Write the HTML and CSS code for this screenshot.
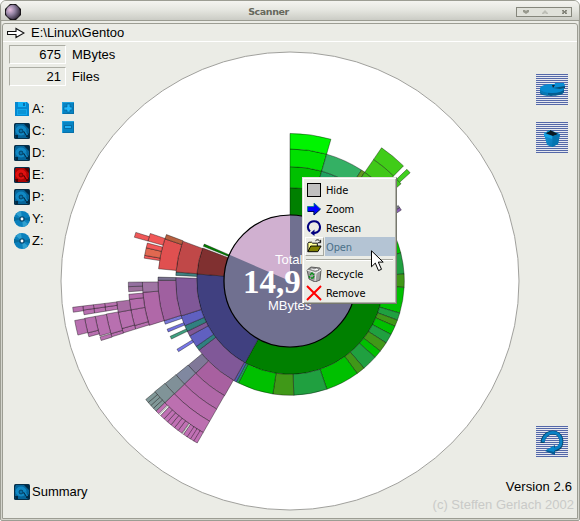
FILE: index.html
```
<!DOCTYPE html>
<html lang="en">
<head>
<meta charset="utf-8">
<title>Scanner</title>
<link rel="stylesheet" href="styles.css">
</head>
<body>
<svg class="defs" width="0" height="0" aria-hidden="true">
  <defs>
    <symbol id="disk" viewBox="0 0 16 16">
      <rect width="16" height="16" rx="1.5" fill="#06304a"/>
      <path d="M2 1h11v2h2v10l-2 2H2L1 12V3z" fill="var(--mid)"/>
      <path d="M10 1h5v5zM1 12h3v3H2zM12 13l3-3v4h-3z" fill="var(--dark)"/>
      <ellipse cx="7" cy="7.500" rx="5.500" ry="5" fill="var(--lite)"/>
      <circle cx="7" cy="8" r="2" fill="var(--mid)" stroke="var(--dark)" stroke-width=".6"/>
      <circle cx="7" cy="8" r=".7" fill="var(--lite)"/>
      <path d="M10 8l4.500 5.500" stroke="var(--dark)" stroke-width="2.600"/>
      <path d="M10 6.500l3.500 5.500" stroke="var(--lite)" stroke-width="1.500"/>
    </symbol>
    <symbol id="cd" viewBox="0 0 16 16">
      <circle cx="8" cy="8" r="8" fill="#0a80bc"/>
      <path d="M8 8L2 3Q4 .7 7 0zM8 8l6 5q-2 2.300-5 3z" fill="#30a0d0"/>
      <path d="M8 8L16 6v4zM8 8L0 6v4z" fill="#066c9c"/>
      <circle cx="8" cy="8" r="2.800" fill="#0a4c74"/>
      <circle cx="8" cy="8" r="1.400" fill="#fff"/>
    </symbol>
    <radialGradient id="ball" cx=".3" cy=".35" r=".75">
      <stop offset="0" stop-color="#e8c0e0"/><stop offset=".45" stop-color="#9484a4"/><stop offset="1" stop-color="#302838"/>
    </radialGradient>
    <linearGradient id="bluefill" x1="0" x2="1" y1="0" y2="1">
      <stop offset="0" stop-color="#18a0e0"/><stop offset="1" stop-color="#0468a8"/>
    </linearGradient>
  </defs>
</svg>
<div class="window">
  <header class="titlebar">
    <svg class="orb" viewBox="0 0 16 16"><path d="M5 0h6l5 5v6l-5 5H5l-5-5V5z" fill="#181418"/><circle cx="8" cy="8" r="7.200" fill="url(#ball)"/></svg>
    <span class="title">Scanner</span>
    <svg class="controls" viewBox="0 0 56 10">
      <rect x=".5" y=".5" width="55" height="9" fill="#e0e1da" stroke="#85867c"/>
      <path d="M7 3h2l1 1 1-1h2v2l-3 2-3-2z" fill="#98998e"/>
      <path d="M26 6l3-3 3 3v1h-2l-1-1-1 1h-2z" fill="#bdbeb6"/>
      <path d="M46 3h2v1h1V3h2v1l-1 1 1 1v1h-2V6h-1v1h-2V6l1-1-1-1z" fill="#85867c"/>
    </svg>
  </header>
  <main class="client">
    <div class="path">
      <svg class="arrow" viewBox="0 0 18 12"><path d="M.5 4.500h8.500V1.500l8 4.500-8 4.500v-3H.5z" fill="#fff" stroke="#111" stroke-width="1.100"/></svg>
      <span>E:\Linux\Gentoo</span>
    </div>
    <div class="stage">
      <svg class="chart" id="chart" viewBox="-230 -230 460 460"></svg>
      <aside class="left">
        <div class="stat"><output class="field">675</output><span>MBytes</span></div>
        <div class="stat"><output class="field">21</output><span>Files</span></div>
        <div class="tools">
          <ul class="drives">
            <li><svg class="drive" viewBox="0 0 16 16"><path d="M1 1h12l2 2v12H1z" fill="#0588d0"/><path d="M4 1h8v5H4z" fill="#10b0f4"/><path d="M9 2h2v3H9z" fill="#0570b0"/><path d="M3 8h10v6H3z" fill="#10a8ec"/><path d="M4 10h8M4 12h8" stroke="#0680c0"/></svg>A:</li>
            <li><svg class="drive"><use href="#disk"/></svg>C:</li>
            <li><svg class="drive"><use href="#disk"/></svg>D:</li>
            <li><svg class="drive active"><use href="#disk"/></svg>E:</li>
            <li><svg class="drive"><use href="#disk"/></svg>P:</li>
            <li><svg class="drive"><use href="#cd"/></svg>Y:</li>
            <li><svg class="drive"><use href="#cd"/></svg>Z:</li>
          </ul>
          <div class="zoomers">
            <svg viewBox="0 0 12 12"><rect width="12" height="12" fill="#0870a8"/><path d="M0 0h12v1H1v11H0z" fill="#20a0dc"/><path d="M1 1h10v10H1z" fill="#0684c4"/><path d="M5 2h3v3h2v3H8v2H5V8H2V5h3z" fill="#20b8fc" stroke="#055f94" stroke-width=".6"/></svg>
            <svg viewBox="0 0 12 12"><rect width="12" height="12" fill="#0870a8"/><path d="M0 0h12v1H1v11H0z" fill="#20a0dc"/><path d="M1 1h10v10H1z" fill="#0684c4"/><path d="M2.500 4.500h7v3h-7z" fill="#20b0f4" stroke="#055f94" stroke-width=".8"/></svg>
          </div>
        </div>
        <div class="summary"><svg class="drive"><use href="#disk"/></svg>Summary</div>
      </aside>
      <aside class="right">
        <svg class="action" viewBox="0 0 32 31">
          <path d="M4 14v5c1 4 23 4 24-1v-4z" fill="#045c90"/><path d="M4 14v4c1 2 4 3 8 3.500V17z" fill="#0878b4"/>
          <ellipse cx="16" cy="14.500" rx="12" ry="4.500" fill="#078ad0"/>
          <path d="M17 14l2-5 9 0 1 3z" fill="#0a8ed4"/><path d="M17 14l12-2v2l-5 1z" fill="#045078"/><path d="M16 11h3l-2 3z" fill="#182030"/>
        </svg>
        <svg class="action bin" viewBox="0 0 32 31">
          <path d="M8 12l6-4 10 4-2 10-6 3-5-2z" fill="url(#bluefill)"/><path d="M9 11l5-3 8 4-5 2z" fill="#0c1820"/><path d="M17 14l7-2-2 10-6 3z" fill="#0574b0"/><path d="M8 12v-1l6-3v1zM8 12l8 2v3l-8-3z" fill="#18a4e4"/>
        </svg>
        <svg class="action refresh" viewBox="0 0 32 31">
          <path d="M6.500 17C7 9 14 5 20 7c7 3 7 13 1 16l-4 1" fill="none" stroke="#064468" stroke-width="4"/>
          <path d="M9 25l10-6v10z" fill="#045c94"/>
          <path d="M7 16C8 9 14 5 20 7c6 3 7 12 1 15l-4 2" fill="none" stroke="#0880c4" stroke-width="3"/>
          <path d="M10 24l8-4v6z" fill="#0888cc"/>
        </svg>
        <p class="version">Version 2.6</p>
        <p class="copyright">(c) Steffen Gerlach 2002</p>
      </aside>
    </div>
  </main>
</div>
<div class="menu">
  <div class="item"><svg viewBox="0 0 16 16"><rect x="1.500" y="1.500" width="13" height="13" fill="#c0c0c0" stroke="#000"/></svg><span>Hide</span></div>
  <div class="item"><svg viewBox="0 0 16 16"><path d="M1.500 5.500H8V2l6.500 6L8 14v-3.500H1.500z" fill="#00f" stroke="#008080" stroke-width=".8"/><path d="M2 10.500h6V14l6.500-6" fill="none" stroke="#000060"/></svg><span>Zoom</span></div>
  <div class="item"><svg viewBox="0 0 16 16"><path d="M4 11.500C-.5 7 3 1.300 8 1.300c6.500 0 8 8 3 11l-3 1" fill="none" stroke="#000080" stroke-width="2"/><path d="M4.500 13l4-3.500v6.500z" fill="#000080"/></svg><span>Rescan</span></div>
  <div class="item hot"><svg viewBox="0 0 18 18"><path d="M2 14.500v-9l1-1h3l1 1h5v3" fill="#ffff98" stroke="#000"/><path d="M2 14.500l3-6h11l-3.500 6z" fill="#808000" stroke="#000"/><path d="M10 3c2-2 4-1 5 1M15.500 2v3h-3" fill="none" stroke="#000"/></svg><span>Open</span></div>
  <hr>
  <div class="item"><svg viewBox="0 0 16 16"><path d="M1 4l4-3 9 1 1 2-1 10-5 2-6-3z" fill="#a0a0a0" stroke="#444" stroke-width=".8"/><path d="M1 4l9 3 5-3-5 3-1 8" fill="none" stroke="#eee"/><path d="M3 3l3-1 2 1 3-1 2 2-4 1z" fill="#f8f8f8" stroke="#555" stroke-width=".5"/><path d="M4 9l2-2 2 2M8 10l-1 2H5M4 12L3 10" fill="none" stroke="#089018" stroke-width="1.300"/></svg><span>Recycle</span></div>
  <div class="item"><svg viewBox="0 0 16 16"><path d="M1 1l14 14M15 1L1 15" stroke="#f00" stroke-width="2"/></svg><span>Remove</span></div>
</div>
<svg class="cursor" viewBox="0 0 13 22"><path d="M.5 .8v16l3.800-3.700 3.200 7.500 3-1.300-3.200-7.200h4.900z" fill="#fff" stroke="#000"/></svg>
<script src="chart.js"></script>
</body>
</html>
```
FILE: styles.css
```
* { box-sizing: border-box; }
body {
  margin: 0;
  width: 580px;
  height: 521px;
  overflow: hidden;
  position: relative;
  background: #fff;
  color: #000;
  font: 13px/16px "Liberation Sans", Arial, sans-serif;
}
.defs { position: absolute; }
.window {
  display: flex;
  flex-direction: column;
  height: 521px;
  background: #ebece6;
  border: 1px solid #9c9d93;
  border-radius: 6px 6px 2px 2px;
  box-shadow: inset 0 0 0 1px #d4d5cd;
}
.titlebar {
  display: flex;
  align-items: center;
  justify-content: space-between;
  height: 20px;
  padding: 2px 7px 0 4px;
  border-bottom: 1px solid #9c9d93;
  border-radius: 5px 5px 0 0;
  background: linear-gradient(#f4f4f0, #e6e7e1 45%, #cbccc5);
}
.orb { width: 16px; height: 16px; }
.title {
  font: bold 9.500px/12px "DejaVu Sans", sans-serif;
  letter-spacing: -.4px;
  color: #67685c;
}
.controls { width: 56px; height: 10px; }
.client {
  flex: 1;
  display: flex;
  flex-direction: column;
  margin: 2px 1px 1px;
  border: 1px solid #9c9d93;
  border-radius: 3px 3px 0 0;
}
.path {
  display: flex;
  align-items: center;
  gap: 6px;
  height: 18px;
  padding: 0 0 0 4px;
  border-bottom: 1px solid #fff;
}
.arrow { width: 18px; height: 12px; }
.stage { flex: 1; display: grid; grid-template-columns: 57px 1fr 150px; grid-template-rows: 1fr; }
.chart { grid-area: 1 / 1 / 2 / 4; width: 460px; height: 460px; margin: 9px 0 0 57px; }
.chart .rim { fill: #fff; stroke: #a0a09c; }
.chart .seg { stroke: rgba(0, 0, 0, .42); stroke-width: .9; }
.chart .disc { fill: none; stroke: #000; stroke-width: 1.200; }
.chart text { fill: #fff; font-size: 13px; }
.chart .total { font: bold 33px "Liberation Serif", serif; }
.left { grid-area: 1 / 1; width: 120px; padding: 3px 0 15px 6px; display: flex; flex-direction: column; }
.stat { display: flex; align-items: center; gap: 6px; height: 19px; margin-bottom: 3px; }
.field {
  width: 57px;
  height: 19px;
  padding: 1px 4px 0 0;
  text-align: right;
  border: 1px solid;
  border-color: #acada4 #fff #fff #acada4;
}
.tools { display: flex; gap: 16px; margin: 9px 0 0 5px; }
.drives { list-style: none; margin: 0; padding: 0; width: 32px; }
.drives li, .summary { display: flex; align-items: center; gap: 2px; height: 22px; }
.drive { width: 16px; height: 16px; flex: none; --lite: #1088c4; --mid: #066498; --dark: #022a44; }
.drive.active { --lite: #e01010; --mid: #a80404; --dark: #500000; }
.zoomers { display: flex; flex-direction: column; gap: 7px; padding-top: 4px; }
.zoomers svg { width: 12px; height: 12px; display: block; }
.summary { margin: auto 0 0 5px; }
.right { grid-area: 1 / 3; display: flex; flex-direction: column; align-items: flex-end; padding: 32px 3px 5px 0; white-space: nowrap; }
.action {
  width: 32px;
  height: 31px;
  flex: none;
  margin-right: 6px;
  background: repeating-linear-gradient(#5468a8 0 1px, #e6e8ee 1px 2px);
}
.bin { margin-top: 17px; }
.refresh { margin-top: 273px; }
.version, .copyright { margin: 0; }
.version { margin: 22px 2px 0 0; letter-spacing: .1px; }
.copyright { margin-top: 2px; color: #c9cac8; }
.menu {
  position: absolute;
  left: 302px;
  top: 177px;
  width: 95px;
  height: 127px;
  padding: 2px 1px;
  background: #ebece6;
  border: 1px solid;
  border-color: #e4e4de #77786e #77786e #e4e4de;
  box-shadow: inset 1px 1px #fff, inset -1px -1px #b0b1a8;
  font: 11px/20px "DejaVu Sans Condensed", "DejaVu Sans", sans-serif;
  font-stretch: condensed;
  letter-spacing: -.1px;
}
.item { display: flex; align-items: center; height: 19px; padding-left: 2px; }
.item svg { width: 16px; height: 16px; margin-right: 3px; flex: none; }
.item span { flex: 1; height: 19px; padding: 1px 0 0 1px; }
.menu .hot { padding-left: 1px; color: #4a7088; }
.menu .hot svg { width: 19px; height: 19px; margin-right: 1px; border: 1px solid; border-color: #fff #a8a9a0 #a8a9a0 #fff; }
.hot span { background: #b4c4d4; }
.menu hr { margin: 3px 2px; height: 2px; border: 0; border-top: 1px solid #a8a9a0; border-bottom: 1px solid #fff; }
.cursor { position: absolute; left: 371px; top: 250px; width: 13px; height: 22px; }
```
FILE: chart.js
```
// Each entry: ring number, start and end angle (degrees clockwise from the top), colour.
const segments = [
  [1, 0, 208.7, '#008000'], [1, 208.7, 274.3, '#404080'], [1, 274.3, 290.7, '#803030'], [1, 291.8, 293.3, '#008000'],
  [2, 0, 16.1, '#00c000'], [3, 0, 16.1, '#00e000'], [4, 0, 16.1, '#00f400'],
  [2, 16.1, 34, '#20a060'], [3, 16.1, 32.8, '#34b064'], [3, 32.8, 34.5, '#609820'],
  [2, 34.5, 48, '#30a820'], [3, 34.5, 44.6, '#40b818'], [4, 34.5, 44.6, '#40c818'], [5, 34.5, 44.6, '#40cc18'],
  [3, 44.6, 49, '#40b818'], [4, 46.2, 48.8, '#40c81c'], [5, 46.3, 48, '#40d020'],
  [3, 55.1, 56.2, '#808090'], [3, 56.2, 57.5, '#8860b0'],
  [2, 66, 75.8, '#00c000'], [2, 75.8, 86.5, '#20a040'], [2, 86.5, 93.2, '#409818'], [2, 93.2, 106.3, '#00c000'],
  [2, 106.3, 110, '#20a040'], [2, 110, 113.3, '#409818'], [2, 113.3, 117.9, '#00c000'], [2, 117.9, 122.8, '#20a040'],
  [2, 122.8, 127.8, '#409818'], [2, 127.8, 131.9, '#00c000'], [2, 131.9, 139.7, '#20a040'], [2, 139.7, 144, '#409818'],
  [2, 144, 161.2, '#00c000'], [2, 161.2, 178.1, '#20a040'], [2, 178.1, 188.6, '#409818'], [2, 188.6, 206.8, '#00c000'],
  [2, 206.8, 208, '#20a060'], [2, 208, 209.3, '#5060b0'],
  [2, 209.3, 232.8, '#805898'], [2, 232.8, 235.1, '#308080'], [2, 235.1, 241.3, '#6060c0'], [2, 241.3, 243.9, '#805898'],
  [2, 243.9, 247, '#308080'], [2, 247, 252.2, '#6060c0'], [2, 252.2, 271.7, '#805898'], [2, 272.8, 274.5, '#408080'],
  [2, 274.5, 290.4, '#c04848'],
  [3, 237.6, 238.9, '#7878e8'], [3, 243.9, 245.2, '#40a080'], [3, 247.3, 248.6, '#7070e0'], [3, 250.9, 252.5, '#7878d8'],
  [3, 252.5, 270.3, '#a060a0'], [3, 270.3, 271.7, '#787090'], [3, 275.3, 288.6, '#e05050'], [3, 288.6, 290.6, '#b86040'],
  [4, 252.5, 265.6, '#b068a8'], [4, 265.6, 269.6, '#a074a4'],
  [4, 278.9, 280, '#f05858'], [4, 280, 283, '#e06850'], [4, 283, 284.9, '#f05858'], [4, 285.7, 288.8, '#f05858'], [5, 285.7, 287.5, '#f05858'],
  [5, 252.7, 254, '#b870b0'], [5, 254, 259.7, '#b46cac'], [5, 259.7, 263.5, '#b46cac'], [5, 263.5, 265.3, '#b46cac'],
  [5, 266.2, 268, '#9c709c'], [5, 268, 269.6, '#9470a0'],
  [6, 252.7, 254.2, '#b870b0'], [6, 254.2, 259.7, '#b870b0'], [6, 259.7, 263.2, '#a86ca4'],
  [7, 252.6, 253.6, '#b870b0'], [7, 253.6, 259.8, '#b870b0'], [7, 260.7, 262, '#b870b0'], [7, 262, 263.1, '#b870b0'],
  [8, 252.5, 253.6, '#b870b0'], [8, 253.9, 259.7, '#b870b0'], [8, 260.7, 262, '#b870b0'], [8, 262, 263.1, '#b870b0'],
  [9, 254.5, 255.6, '#b870b0'], [9, 255.6, 259.7, '#b870b0'], [9, 260.7, 262, '#b870b0'], [9, 262, 263.1, '#b870b0'],
  [10, 255.7, 259.6, '#b870b0'], [10, 261.8, 263.1, '#b870b0'],
  [3, 209.7, 225.6, '#a860a0'], [4, 209.8, 225.7, '#b068a8'], [5, 209.8, 225.7, '#b86cac'], [6, 209.8, 225.8, '#bc70b0'],
  [3, 225.6, 230.4, '#807898'], [4, 225.7, 230.5, '#8088a0'], [5, 225.7, 230.6, '#809098'], [6, 225.8, 230.7, '#809498'],
  ...[225.8, 227, 228.2, 229.4].map(a => [7, a, a + 1.2, '#809898']),
  ...[209.8, 211, 212.2, 213.4, 215.4, 216.8, 218.2, 219.6, 221, 222.4].map(a => [7, a, a + 1.4, '#c070b4']),
  [7, 214.8, 215.2, '#ffffff'], [7, 223.9, 224.4, '#ffffff'], [7, 224.7, 225.8, '#c070b4']
];

// Every ring has the same area as the centre disc.
const radius = n => 66 * Math.sqrt(n);
const point = (r, deg) => {
  const a = deg * Math.PI / 180;
  return (r * Math.sin(a)).toFixed(2) + ' ' + (-r * Math.cos(a)).toFixed(2);
};
const sector = (inner, outer, a, b, fill, cls) => {
  const large = b - a > 180 ? 1 : 0;
  return `<path class="${cls}" fill="${fill}" d="M${point(inner, a)}L${point(outer, a)}A${outer} ${outer} 0 ${large} 1 ${point(outer, b)}L${point(inner, b)}A${inner} ${inner} 0 ${large} 0 ${point(inner, a)}Z"/>`;
};

document.getElementById('chart').innerHTML =
  '<circle class="rim" r="229"/>' +
  segments.map(([n, a, b, fill]) => sector(radius(n), radius(n + 1), a, b, fill, 'seg')).join('') +
  '<circle r="66" fill="#707090"/>' +
  sector(0, 66, 293.4, 360, '#d0b0d0', 'slice') +
  '<circle class="disc" r="66"/>' +
  '<text x="-15" y="-17">Total</text><text class="total" x="-47" y="12">14,9</text><text x="-22" y="29">MBytes</text>';
```
